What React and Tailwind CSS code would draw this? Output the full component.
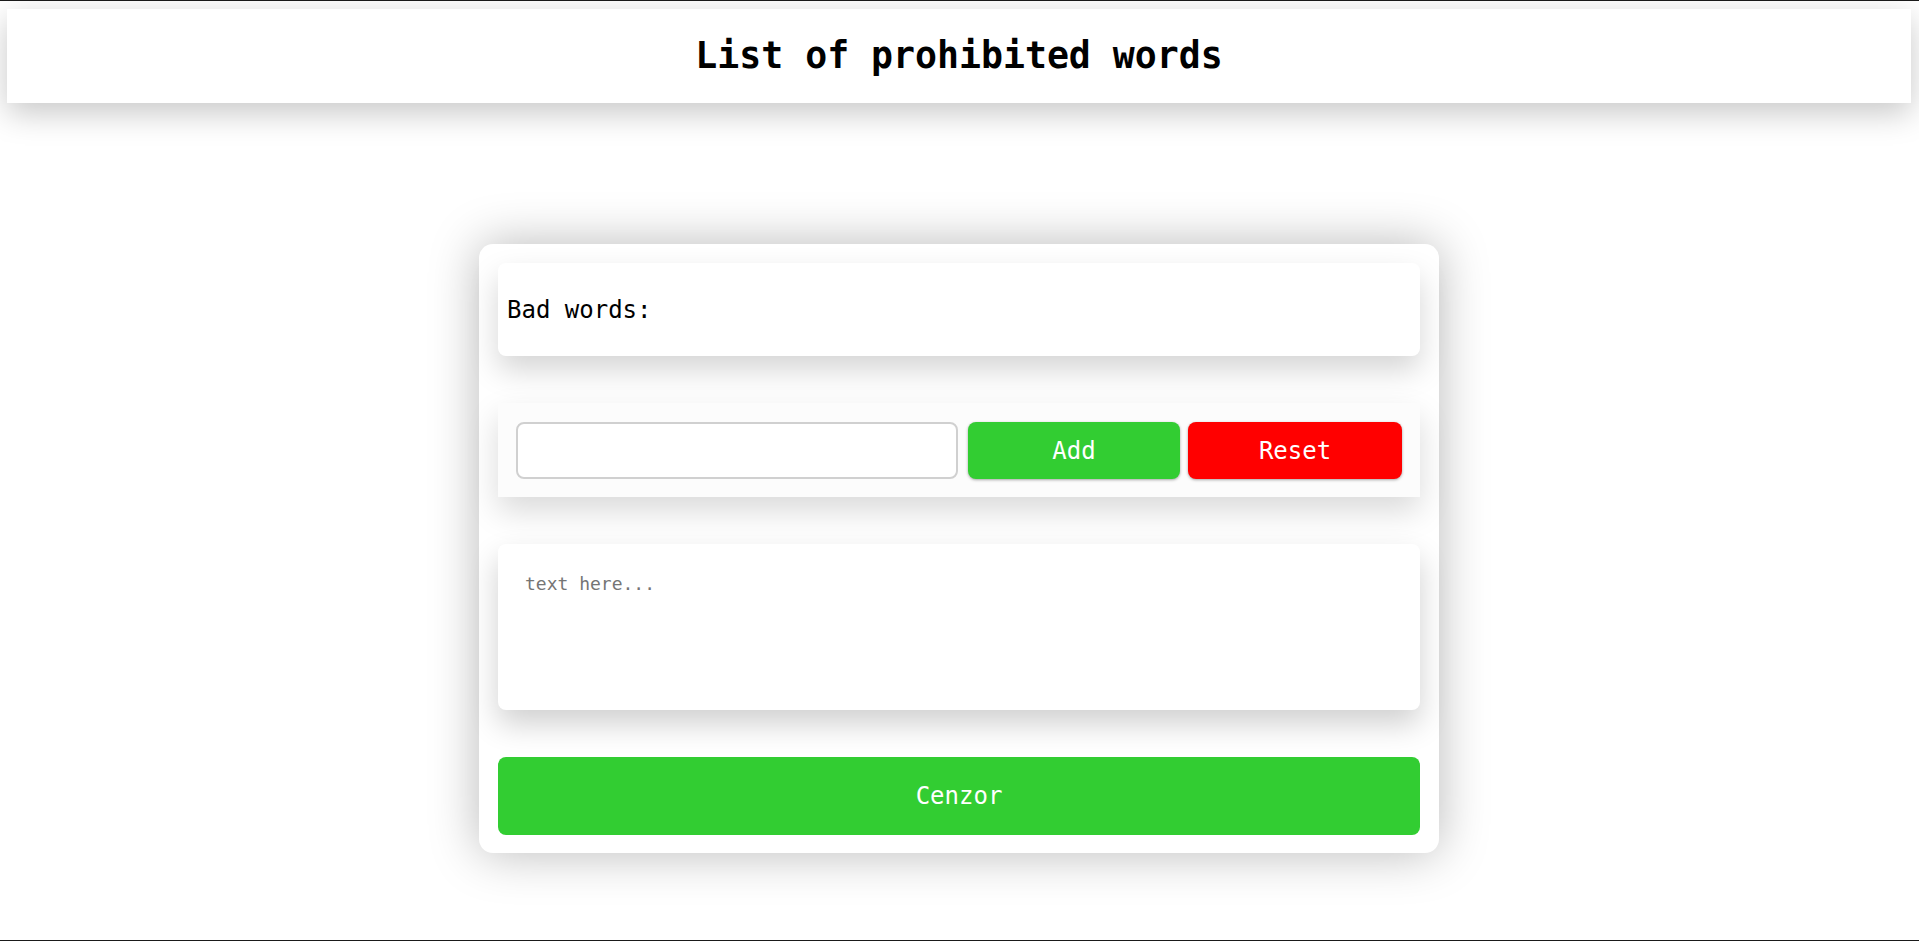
import React from 'react';

function WordRow() {
  return (
    <div className="flex items-center gap-[8px] bg-[#fcfcfc] px-[18px] pt-[19px] pb-[18px]">
      <input
        type="text"
        className="h-[57px] w-[442px] mr-[2px] rounded-[8px] border-2 border-[#d0d0d0] bg-white px-3 text-[20px] outline-none"
      />
      <button className="h-[57px] w-[212px] rounded-[8px] bg-[#32cd32] text-[24px] text-white shadow-[0_1px_3px_rgba(0,0,0,0.35)]">
        Add
      </button>
      <button className="h-[57px] w-[214px] rounded-[8px] bg-[#ff0000] text-[24px] text-white shadow-[0_1px_3px_rgba(0,0,0,0.35)]">
        Reset
      </button>
    </div>
  );
}

export default function App() {
  return (
    <div className="h-screen overflow-hidden border-y border-[#1a1a1a] bg-white font-['DejaVu_Sans_Mono',monospace] text-black">
      <header className="mt-[8px] ml-[7px] mr-[8px] flex h-[94px] items-center justify-center bg-white shadow-[0_10px_30px_rgba(0,0,0,0.22)]">
        <h1 className="text-[36.5px] font-bold">List of prohibited words</h1>
      </header>

      <main className="ml-[479px] mt-[141px] flex w-[960px] flex-col gap-[47px] rounded-[14px] bg-white px-[19px] pt-[19px] pb-[18px] shadow-[0_0_50px_rgba(0,0,0,0.28)]">
        <div className="flex h-[93px] items-center rounded-[8px] bg-white pl-[9px] shadow-[0_14px_30px_rgba(0,0,0,0.17)]">
          <p className="text-[24px]">Bad words:</p>
        </div>

        <div className="shadow-[0_14px_30px_rgba(0,0,0,0.15)]">
          <WordRow />
        </div>

        <textarea
          placeholder="text here..."
          className="h-[166px] resize-none rounded-[8px] bg-white pl-[27px] pr-[25px] pt-[29px] text-[18px] leading-[21px] outline-none shadow-[0_14px_30px_rgba(0,0,0,0.19)] placeholder:text-[#757575]"
        />

        <button className="h-[78px] rounded-[8px] bg-[#32cd32] text-[24px] text-white">
          Cenzor
        </button>
      </main>
    </div>
  );
}
